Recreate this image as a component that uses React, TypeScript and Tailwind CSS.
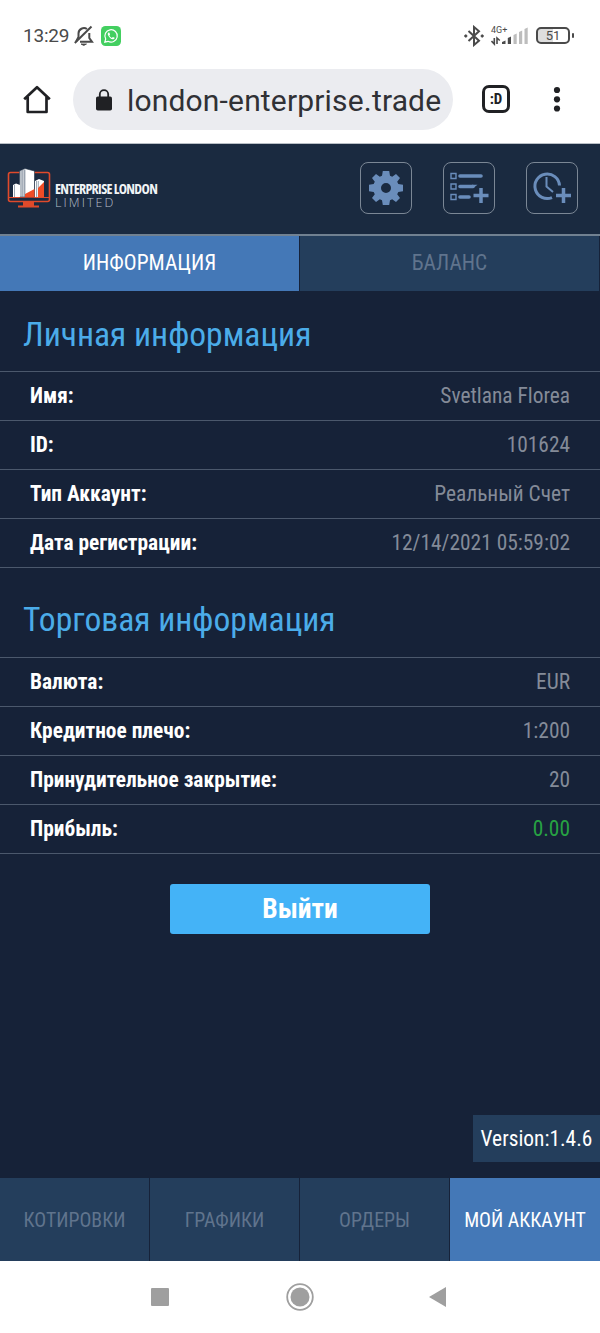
const personalInfo = [
  { label: "Имя:", value: "Svetlana Florea" },
  { label: "ID:", value: "101624" },
  { label: "Тип Аккаунт:", value: "Реальный Счет" },
  { label: "Дата регистрации:", value: "12/14/2021 05:59:02" },
];

const tradingInfo = [
  { label: "Валюта:", value: "EUR" },
  { label: "Кредитное плечо:", value: "1:200" },
  { label: "Принудительное закрытие:", value: "20" },
  { label: "Прибыль:", value: "0.00", profit: true },
];

type Row = { label: string; value: string; profit?: boolean };

function StatusBar() {
  return (
    <div className="flex h-[69px] items-center pl-[23px] pr-[26px] pt-[2px] text-[#4a4a4a]">
      <span className="w-[51px] text-[19px] leading-none tracking-[-0.2px]">13:29</span>
      {/* muted bell */}
      <svg className="h-[22px] w-[20px]" viewBox="0 0 20 22" fill="none" stroke="#4a4a4a" strokeWidth="2">
        <path d="M4.5 14V8.5A5.5 5.5 0 0 1 13 4M15.3 8V13L18 16.8H6M4.5 12L2 16.8" />
        <path d="M.8 18L17.5 1.5" />
        <path d="M7 19H12.5Q9.8 21.8 7 19Z" fill="#4a4a4a" strokeWidth=".8" />
      </svg>
      {/* whatsapp */}
      <svg className="ml-[7px] size-[20px]" viewBox="0 0 20 20" fill="none">
        <rect width="20" height="20" rx="4.5" fill="#43cf60" />
        <path d="M3.8 16.2L4.7 13A6.2 6.2 0 1 1 7 15.3Z" stroke="#fff" strokeWidth="1.2" />
        <path d="M7.6 6.4c-1 .6-1.1 1.7-.4 3 1 1.9 2.7 3.5 4.5 3.9 1 .1 1.9-.5 2-1.5l-1.9-.9-.9 1c-1.2-.5-2-1.3-2.5-2.4l.7-.9-.8-2Z" fill="#fff" />
      </svg>
      <div className="ml-auto flex items-center">
        <svg className="h-[22px] w-[20px]" viewBox="0 0 20 22" fill="none" stroke="#4a4a4a" strokeWidth="2">
          <path d="M4.5 6L15 15.8L10 20V2L15 6.2L4.5 16" />
          <circle cx="1.8" cy="11" r="1.2" fill="#4a4a4a" strokeWidth=".8" />
          <circle cx="18.2" cy="11" r="1.2" fill="#4a4a4a" strokeWidth=".8" />
        </svg>
        <div className="ml-[7px] w-[38px]">
          <div className="h-[9px] text-[9px] leading-[8px]">4G+</div>
          <svg className="-mt-[9px] h-[20px] w-[38px]" viewBox="0 0 38 20">
            <path d="M3.3 12V18L.5 15M6 18V12L8.800 14.500" stroke="#4a4a4a" strokeWidth="1.6" fill="none" />
            <path d="M11 18V16L14.500 14.500V18ZM16.800 18V12L20 10.500V18Z" fill="#4a4a4a" />
            <path d="M22.500 18V9L25.700 7.500V18ZM28 18V6L31.200 4.500V18ZM33.500 18V3L36.700 1.500V18Z" fill="#bdbdbd" />
          </svg>
        </div>
        <div className="ml-[7px] flex items-center">
          <div className="flex h-[17px] w-[34px] items-center justify-center rounded-[5px] border-2 border-[#4a4a4a] bg-linear-to-r from-[#dedede] from-50% to-white to-50% text-[13px] leading-none">
            51
          </div>
          <div className="ml-[2px] h-[5px] w-[2px] rounded-full bg-[#4a4a4a]"></div>
        </div>
      </div>
    </div>
  );
}

function BrowserBar() {
  return (
    <div className="flex h-[75px] items-start border-b border-[#b9bfc6]">
      <svg className="ml-[23px] mt-[16px] h-[29px] w-[28px]" viewBox="0 0 28 29" fill="none" stroke="#202124" strokeWidth="2.7" strokeLinejoin="round">
        <path d="M1.2 14.3L14 2.2L26.8 14.3M4.7 12V27H23.5V12" />
      </svg>
      <div className="ml-[22px] flex h-[61px] w-[380px] items-center rounded-full bg-[#ebecf0] pl-[23px]">
        <svg className="h-[22px] w-[16px]" viewBox="0 0 16 22">
          <rect y="7.5" width="16" height="14" rx="1.8" fill="#202124" />
          <path d="M3.8 8V5.3a4.2 4.2 0 0 1 8.4 0V8" fill="none" stroke="#202124" strokeWidth="1.8" />
        </svg>
        <span className="ml-[15px] pt-[2px] text-[30px] tracking-[0.17px] whitespace-nowrap text-[#303135]">london-enterprise.trade</span>
      </div>
      <div className="ml-[29px] mt-[16px] flex h-[28px] w-[28px] items-center justify-center rounded-[7px] border-[3px] border-[#202124] text-[15px] font-bold font-stretch-condensed text-[#202124]">
        :D
      </div>
      <svg className="ml-[43px] mt-[17px] h-[27px] w-[8px]" viewBox="0 0 8 27" fill="#202124">
        <circle cx="4" cy="4" r="3.1" />
        <circle cx="4" cy="13.3" r="3.1" />
        <circle cx="4" cy="22.5" r="3.1" />
      </svg>
    </div>
  );
}

function Logo() {
  return (
    <div className="ml-[7px] flex items-center pb-[2px]">
      <svg className="h-[44px] w-[44px]" viewBox="7 166 44 44">
        <rect x="8.5" y="172.5" width="41" height="29" rx="2" fill="none" stroke="#e04a2b" strokeWidth="1.6" />
        <path d="M23 202H34V205.500H39V207.500H18V205.500H23Z" fill="#e04a2b" />
        <path d="M9 197.500H49" stroke="#e04a2b" strokeWidth="1" />
        <path d="M19.5 171L25 168.5L34.5 171V197H19.5Z" fill="#fff" stroke="#1a2a40" strokeWidth=".6" />
        <path d="M21 170.500V197M22.900 170V197M24.800 169.500V197" stroke="#5e6d80" strokeWidth=".9" />
        <path d="M13 185L16 183.5L20 185V197H13ZM35 181L39 179L44 181V197H35Z" fill="#fff" />
        <path d="M14.5 185V197M36.5 181V197M38.3 181V197" stroke="#8290a0" strokeWidth=".8" />
        <path d="M25 197V194L34.5 189V197ZM38 197V188L44 182V197Z" fill="#f04c26" />
      </svg>
      <div className="ml-[4px] pt-[15px] font-['Open_Sans',sans-serif] whitespace-nowrap">
        <div className="text-[14px] leading-[14px] font-bold tracking-[-0.68px] text-[#f1f4f6]">ENTERPRISE LONDON</div>
        <div className="text-[12.5px] leading-[14px] font-light font-stretch-normal tracking-[2.1px] text-[#b5bec8]">LIMITED</div>
      </div>
    </div>
  );
}

function AppHeader() {
  const box = "flex size-[52px] items-center justify-center rounded-[8px] border border-[#7b8795]";
  return (
    <header className="flex h-[92px] items-center border-b-2 border-[#718191] bg-[#1a2a40]">
      <Logo />
      <div className="ml-auto mr-[22px] flex gap-[31px] pb-[2px]">
        <div className={box}>
          <svg className="size-[34px]" viewBox="-17 -17 34 34" fill="#6a8dbb">
            <path fillRule="evenodd" d="M-3.2 -17H3.2L4 -12.3L6.2 -11.2L10 -14L14 -10L11.2 -6.2L12.3 -4L17 -3.2V3.2L12.3 4L11.2 6.2L14 10L10 14L6.2 11.2L4 12.3L3.2 17H-3.2L-4 12.3L-6.2 11.2L-10 14L-14 10L-11.2 6.2L-12.3 4L-17 3.2V-3.2L-12.3 -4L-11.2 -6.2L-14 -10L-10 -14L-6.2 -11.2L-4 -12.3ZM5 0A5 5 0 1 0 -5 0A5 5 0 1 0 5 0Z" />
          </svg>
        </div>
        <div className={box}>
          <svg className="size-[50px]" viewBox="0 0 50 50" fill="none" stroke="#6a8dbb">
            <path d="M7 10.5H12V15.5H7ZM7 21H12V26H7ZM7 31.5H12V36.5H7Z" strokeWidth="1.4" />
            <path d="M16 13H37M16 23.5H29M16 34H25" strokeWidth="3.6" strokeLinecap="round" />
            <path d="M29 25.2L33.5 21.8H28Z" fill="#6a8dbb" stroke="none" />
            <path d="M37 25V40M29.5 32.5H44.5" strokeWidth="3.5" />
          </svg>
        </div>
        <div className={box}>
          <svg className="size-[50px]" viewBox="0 0 50 50" fill="none" stroke="#6a8dbb" strokeWidth="3">
            <path d="M32.5 22.5A12.3 12.3 0 1 0 25 34.6" />
            <path d="M19.5 14V23.5L26 29" strokeWidth="2" />
            <path d="M36.5 25V40M29 32.5H44" strokeWidth="3.5" />
          </svg>
        </div>
      </div>
    </header>
  );
}

function InfoSection({ title, rows, className }: { title: string; rows: Row[]; className: string }) {
  return (
    <section>
      <h2 className={`flex items-center border-b border-[#4b586c] pl-[23px] text-[33.6px] text-[#4bace9] ${className}`}>
        {title}
      </h2>
      {rows.map((row) => (
        <div key={row.label} className="flex h-[49px] items-center justify-between border-b border-[#4b586c] px-[30px] text-[21.4px]">
          <span className="font-bold text-white">{row.label}</span>
          <span className={row.profit ? "text-[#27a343]" : "text-[#848b98]"}>{row.value}</span>
        </div>
      ))}
    </section>
  );
}

function BottomNav() {
  return (
    <nav className="grid h-[83px] grid-cols-4 text-[19.8px] text-[#60748d]">
      <div className="flex items-center justify-center border-r border-[#162239] bg-[#243e5c] pt-[2px]">КОТИРОВКИ</div>
      <div className="flex items-center justify-center border-r border-[#162239] bg-[#243e5c] pt-[2px]">ГРАФИКИ</div>
      <div className="flex items-center justify-center border-r border-[#162239] bg-[#243e5c] pt-[2px]">ОРДЕРЫ</div>
      <div className="flex items-center justify-center bg-[#4478b7] pt-[2px] text-white">МОЙ АККАУНТ</div>
    </nav>
  );
}

export default function App() {
  return (
    <div className="flex h-[1333px] w-[600px] flex-col overflow-hidden bg-white font-['Roboto',sans-serif]">
      <StatusBar />
      <BrowserBar />
      <main className="flex h-[1117px] flex-col bg-[#162238] font-['Roboto_Condensed','Roboto',sans-serif] font-stretch-condensed">
        <AppHeader />
        <div className="grid h-[55px] grid-cols-2 text-[21.4px]">
          <div className="flex items-center justify-center border-r border-[#162239] bg-[#4478b7] text-white">ИНФОРМАЦИЯ</div>
          <div className="flex items-center justify-center border-r border-[#162239] bg-[#243e5c] text-[#60748d]">БАЛАНС</div>
        </div>
        <InfoSection title="Личная информация" rows={personalInfo} className="h-[81px] pt-[8px]" />
        <InfoSection title="Торговая информация" rows={tradingInfo} className="h-[90px] pt-[16px]" />
        <button className="mt-[30px] h-[50px] w-[260px] self-center rounded-[3px] bg-[#44b3f7] text-[27.5px] font-bold text-white">
          Выйти
        </button>
        <div className="mt-auto mb-[16px] flex h-[47px] w-[127px] items-center justify-center self-end bg-[#243e5c] pt-[2px] text-[21.4px] text-white">
          Version:1.4.6
        </div>
        <BottomNav />
      </main>
      {/* android buttons */}
      <div className="flex h-[72px] items-center justify-center">
        <svg className="h-[30px] w-[300px]" viewBox="0 0 300 30" fill="#9f9f9f">
          <rect x="1" y="6" width="18" height="18" rx="1" />
          <circle cx="150" cy="15" r="9.5" />
          <circle cx="150" cy="15" r="12.8" fill="none" stroke="#9f9f9f" strokeWidth="1.8" />
          <path d="M279 15L296 5V25Z" />
        </svg>
      </div>
    </div>
  );
}
